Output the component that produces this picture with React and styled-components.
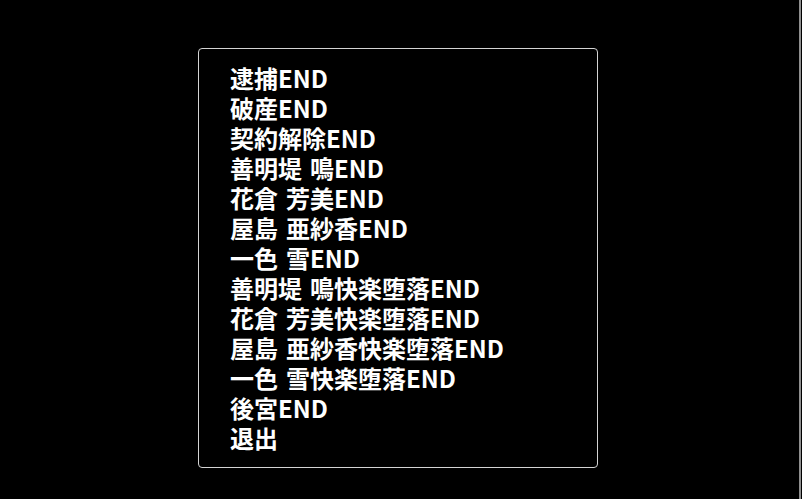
import React from 'react'
import styled, { createGlobalStyle } from 'styled-components'

const GlobalStyle = createGlobalStyle`
  * {
    margin: 0;
    padding: 0;
    box-sizing: border-box;
  }
  html, body {
    background: #000;
  }
`

const Screen = styled.div`
  width: 100%;
  height: 100vh;
  display: flex;
  background: #000;
  overflow: hidden;
`

const Stage = styled.div`
  flex: 1;
  padding-top: 48px;
  padding-left: 198px;
`

const EdgeBar = styled.div`
  width: 2px;
  margin-right: 1px;
  background: #8f8f8f;
`

const MenuWindow = styled.div`
  width: 400px;
  height: 420px;
  border: 1px solid #d4d4d4;
  border-radius: 4px;
  padding: 14px 0 0 31px;
  display: flex;
  flex-direction: column;
`

const MenuItem = styled.div`
  height: 30px;
  line-height: 30px;
  font-family: "Noto Sans CJK JP", "Noto Sans", sans-serif;
  font-weight: 700;
  font-size: 24px;
  color: #fff;
  white-space: pre;
`

const Gap = styled.span`
  display: inline-block;
  width: ${p => p.w}px;
`

const items = [
  '逮捕END',
  '破産END',
  '契約解除END',
  '善明堤 鳴END',
  '花倉 芳美END',
  '屋島 亜紗香END',
  '一色 雪END',
  '善明堤 鳴快楽堕落END',
  '花倉 芳美快楽堕落END',
  '屋島 亜紗香快楽堕落END',
  '一色 雪快楽堕落END',
  '後宮END',
  '退出',
]

const renderLabel = label => {
  const parts = label.split(' ')
  if (parts.length === 1) return label
  return (
    <>
      {parts[0]}
      <Gap w={8} />
      {parts[1]}
    </>
  )
}

export default function App() {
  return (
    <Screen>
      <GlobalStyle />
      <Stage>
        <MenuWindow>
          {items.map(label => (
            <MenuItem key={label}>{renderLabel(label)}</MenuItem>
          ))}
        </MenuWindow>
      </Stage>
      <EdgeBar />
    </Screen>
  )
}
